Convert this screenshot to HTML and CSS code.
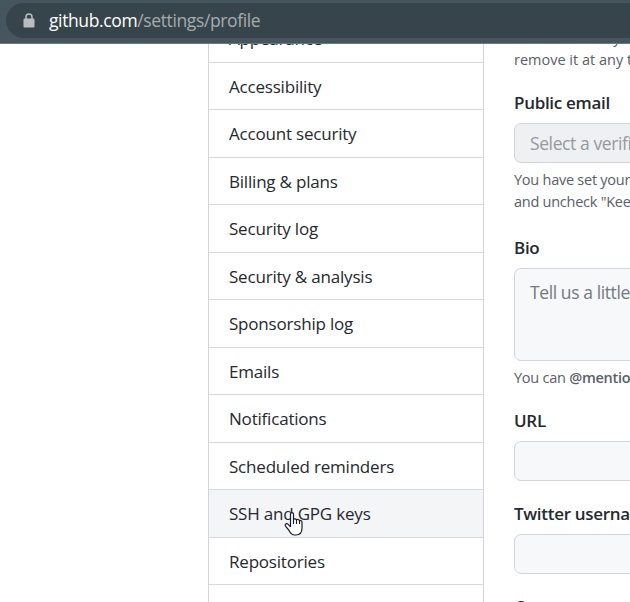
FILE: index.html
```html
<!DOCTYPE html>
<html lang="en">
<head>
<meta charset="utf-8">
<title>Your profile</title>
<link rel="stylesheet" href="styles.css">
</head>
<body>
<header class="toolbar">
  <div class="address">
    <svg class="lock" width="12" height="15" viewBox="0 0 12 15"><path d="M3 6V4a3 3 0 0 1 6 0v2" fill="none" stroke="#b9bdc1" stroke-width="1.5"/><rect x=".5" y="5.5" width="11" height="9" rx="1.2" fill="#b9bdc1"/></svg>
    <span class="url"><span class="host">github.com</span><span class="path">/settings/profile</span></span>
  </div>
</header>
<main class="page">
  <nav class="menu">
    <a class="item"><span>Appearance</span></a>
    <a class="item"><span>Accessibility</span></a>
    <a class="item"><span>Account security</span></a>
    <a class="item"><span>Billing &amp; plans</span></a>
    <a class="item"><span>Security log</span></a>
    <a class="item"><span>Security &amp; analysis</span></a>
    <a class="item"><span>Sponsorship log</span></a>
    <a class="item"><span>Emails</span></a>
    <a class="item"><span>Notifications</span></a>
    <a class="item"><span>Scheduled reminders</span></a>
    <a class="item hovered"><span>SSH and GPG keys</span></a>
    <a class="item"><span>Repositories</span></a>
    <a class="item"><span>Packages</span></a>
  </nav>
  <form class="form">
    <p class="note intro">Your name may appear<br>remove it at any time</p>
    <section class="field email">
      <label class="label">Public email</label>
      <div class="input disabled">Select a verified email</div>
      <p class="note">You have set your email<br>and uncheck "Keep my</p>
    </section>
    <section class="field bio">
      <label class="label">Bio</label>
      <div class="input area">Tell us a little bit</div>
      <p class="note">You can <b>@mention</b> other</p>
    </section>
    <section class="field site">
      <label class="label">URL</label>
      <div class="input"></div>
    </section>
    <section class="field twitter">
      <label class="label">Twitter username</label>
      <div class="input"></div>
    </section>
    <section class="field company">
      <label class="label">Company</label>
    </section>
  </form>
</main>
<svg class="pointer" width="20" height="26" viewBox="0 0 20 26"><path d="M6.5 16V3.2C6.5 1 9.5 1 9.5 3.2V8.5C10 7.4 12.2 7.6 12.5 9C13.2 8 15.2 8.4 15.5 9.8C16.5 9 18 9.8 18 11.3V17C18 21.5 15.5 24 12 24H10.5C7.5 24 6 21.5 4.7 19L1.7 15.3C.3 13.2 2.5 11.8 4.2 13.4L6.5 15.8" fill="#fff" stroke="#1c1c28" stroke-width="1.2" stroke-linejoin="round"/><path d="M9.5 8v5M12.5 9v4M15.5 9.8V13" fill="none" stroke="#1c1c28" stroke-width="1.1"/></svg>
</body>
</html>
```

FILE: styles.css
```css
* { box-sizing: border-box; }
body {
  margin: 0;
  height: 602px;
  display: flex;
  flex-direction: column;
  overflow: hidden;
  background: #fff;
  color: #24292e;
  font-family: "Open Sans", "Noto Sans", sans-serif;
  white-space: nowrap;
}
.toolbar {
  flex: none;
  height: 44px;
  padding: 3px 0 0 6px;
  background: #46565f;
  border-bottom: 1px solid #687880;
}
.address {
  height: 35px;
  display: flex;
  align-items: center;
  gap: 14px;
  padding-left: 17px;
  border-radius: 18px 0 0 18px;
  background: #38444b;
}
.url { margin-top: -2px; font-size: 17.5px; letter-spacing: -0.38px; color: #a5abaf; }
.lock { margin-top: -1px; }
.host { color: #fff; }
.page {
  flex: 1;
  min-height: 0;
  overflow: hidden;
  display: flex;
  align-items: flex-start;
  gap: 30px;
  padding-left: 208px;
}
.menu {
  flex: none;
  width: 276px;
  margin-top: -28.6px;
  border: solid #d1d5da;
  border-width: 0 1px;
}
.item {
  display: flex;
  align-items: center;
  height: 47.5px;
  padding-left: 20px;
  border-bottom: 1px solid #d5d9df;
  font-size: 17px;
  letter-spacing: -0.2px;
}
.hovered { background: #f4f5f7; }
.form { flex: none; width: 300px; }
.field { display: flex; flex-direction: column; }
.note {
  margin: 0;
  font-size: 14.5px;
  line-height: 22px;
  letter-spacing: -0.25px;
  color: #586069;
}
.note b { font-weight: 600; }
.intro { margin-top: -17px; height: 44px; letter-spacing: 0; }
.label {
  height: 24px;
  line-height: 24px;
  font-size: 17px;
  font-weight: 600;
  letter-spacing: -0.3px;
}
.input {
  height: 40px;
  margin-top: 8px;
  padding-left: 15px;
  border: 1px solid #d1d5da;
  border-radius: 7px;
  background: #f6f8fa;
  line-height: 38px;
  font-size: 17.5px;
  letter-spacing: -0.4px;
  color: #75797f;
}
.disabled { background: #eff0f2; color: #94999f; }
.area { height: 93px; line-height: 47px; }
.field .note { margin-top: 6px; }
.email { margin-top: 20px; }
.bio { margin-top: 23px; }
.site { margin-top: 20px; }
.twitter { margin-top: 21px; }
.company { margin-top: 21px; }
.pointer { position: absolute; left: 284px; top: 511px; }
```
